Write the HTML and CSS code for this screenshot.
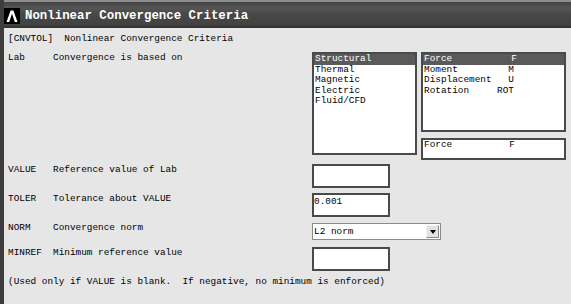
FILE: index.html
```html
<!DOCTYPE html>
<html lang="en">
<head>
  <meta charset="UTF-8">
  <meta name="viewport" content="width=device-width, initial-scale=1.0">
  <title>Nonlinear Convergence Criteria</title>
  <link rel="stylesheet" href="styles.css">
</head>
<body>
  <div class="window">
    <div class="titlebar">
      <svg class="logo" width="16" height="16" viewBox="0 0 16 16">
        <rect width="16" height="16" fill="#000"/>
        <path d="M2.5 14 L6.6 2.5 L9.4 2.5 L13.5 14 L10.8 14 L8 5.8 L5.2 14 Z" fill="#fff"/>
      </svg>
      <span class="title">Nonlinear Convergence Criteria</span>
    </div>
    <div class="content">
      <p class="cmd">[CNVTOL]  Nonlinear Convergence Criteria</p>

      <div class="row row-lab">
        <span class="key">Lab</span>
        <span class="desc">Convergence is based on</span>
        <div class="lists">
          <ul class="list list-type">
            <li class="sel">Structural</li>
            <li>Thermal</li>
            <li>Magnetic</li>
            <li>Electric</li>
            <li>Fluid/CFD</li>
          </ul>
          <div class="list-col">
            <ul class="list list-dof">
              <li class="sel"><span>Force</span><span>F</span></li>
              <li><span>Moment</span><span>M</span></li>
              <li><span>Displacement</span><span>U</span></li>
              <li><span>Rotation</span><span>ROT</span></li>
            </ul>
            <div class="box"><span>Force</span><span>F</span></div>
          </div>
        </div>
      </div>

      <div class="row row-value">
        <span class="key">VALUE</span>
        <span class="desc">Reference value of Lab</span>
        <div class="field"></div>
      </div>

      <div class="row row-toler">
        <span class="key">TOLER</span>
        <span class="desc">Tolerance about VALUE</span>
        <div class="field">0.001</div>
      </div>

      <div class="row row-norm">
        <span class="key">NORM</span>
        <span class="desc">Convergence norm</span>
        <div class="select">
          <span class="opt">L2 norm</span>
          <span class="arrow"></span>
        </div>
      </div>

      <div class="row row-minref">
        <span class="key">MINREF</span>
        <span class="desc">Minimum reference value</span>
        <div class="field"></div>
      </div>

      <p class="note">(Used only if VALUE is blank.  If negative, no minimum is enforced)</p>
    </div>
  </div>
</body>
</html>
```

FILE: styles.css
```css
body {
  margin: 0;
  background-color: #e6e6e6;
  font-family: "Liberation Mono", "DejaVu Sans Mono", monospace;
  font-size: 9.4px;
  color: #000;
}

.window {
  width: 571px;
  height: 304px;
  box-sizing: border-box;
  border-left: 4px solid #3c3c3c;
  display: flex;
  flex-direction: column;
}

/* title bar */
.titlebar {
  height: 28px;
  box-sizing: border-box;
  padding-top: 4px;
  display: flex;
  align-items: center;
  gap: 5px;
  background: linear-gradient(to bottom,
    #8e8e8e 0, #8e8e8e 2px,
    #434343 2px, #555 8px,
    #484848 14px, #424242 25px,
    #333 27px, #333 28px);
}
.logo {
  display: block;
  flex: none;
}
.title {
  color: #fff;
  font-weight: bold;
  font-size: 12.4px;
  white-space: pre;
}

/* body */
.content {
  padding: 5px 0 0 4px;
}
.cmd, .note {
  margin: 0;
  line-height: 12px;
  white-space: pre;
}

.row {
  display: grid;
  grid-template-columns: 45px 259px auto;
  align-items: start;
  line-height: 12px;
}
.key, .desc {
  white-space: pre;
}

.row-lab { margin-top: 7px; }
.row-lab .key,
.row-lab .desc {
  padding-top: 1px;
  line-height: 10.5px;
}
.row-value { margin-top: 4px; }
.row-toler { margin-top: 5px; }
.row-norm { margin-top: 6px; }
.row-norm .key, .row-norm .desc { margin-top: -1px; }
.row-minref { margin-top: 7px; }
.note { margin-top: 5px; }

/* lists */
.lists {
  display: flex;
  gap: 4px;
}
.list-col {
  display: flex;
  flex-direction: column;
  gap: 6px;
}
.list {
  margin: 0;
  padding: 0;
  list-style: none;
  box-sizing: border-box;
  border: 2px solid #4a4a4a;
  background-color: #fff;
}
.list li {
  line-height: 10.5px;
  padding-left: 1px;
  white-space: pre;
}
.list li.sel {
  background-color: #5a5a5a;
  color: #fff;
}
.list-type {
  width: 105px;
  height: 103px;
}
.list-dof {
  width: 145px;
  height: 80px;
}
.list-dof li,
.box {
  display: flex;
  justify-content: space-between;
}
.list-dof li {
  width: 90px;
}
.list-dof li.sel {
  width: auto;
  padding-right: 47px;
}
.box {
  width: 145px;
  height: 22px;
  box-sizing: border-box;
  border: 2px solid #4a4a4a;
  background-color: #fff;
  line-height: 10.5px;
  padding: 0 49px 0 1px;
}

/* inputs */
.field {
  width: 78px;
  height: 24px;
  box-sizing: border-box;
  border: 2px solid #4a4a4a;
  background-color: #fff;
  padding: 2px 0 0 0;
  line-height: 10px;
}
.select {
  width: 129px;
  height: 17px;
  box-sizing: border-box;
  border: 1px solid #8c8c8c;
  background-color: #fff;
  display: flex;
  align-items: center;
  justify-content: space-between;
}
.opt {
  padding-left: 1px;
  white-space: pre;
}
.arrow {
  width: 13px;
  height: 13px;
  margin-right: 1px;
  box-sizing: border-box;
  background-color: #e2e2e2;
  border: 1px solid;
  border-color: #f4f4f4 #8a8a8a #8a8a8a #f4f4f4;
  display: flex;
  align-items: center;
  justify-content: center;
}
.arrow::after {
  content: "";
  border-left: 3.5px solid transparent;
  border-right: 3.5px solid transparent;
  border-top: 4px solid #000;
}
```
